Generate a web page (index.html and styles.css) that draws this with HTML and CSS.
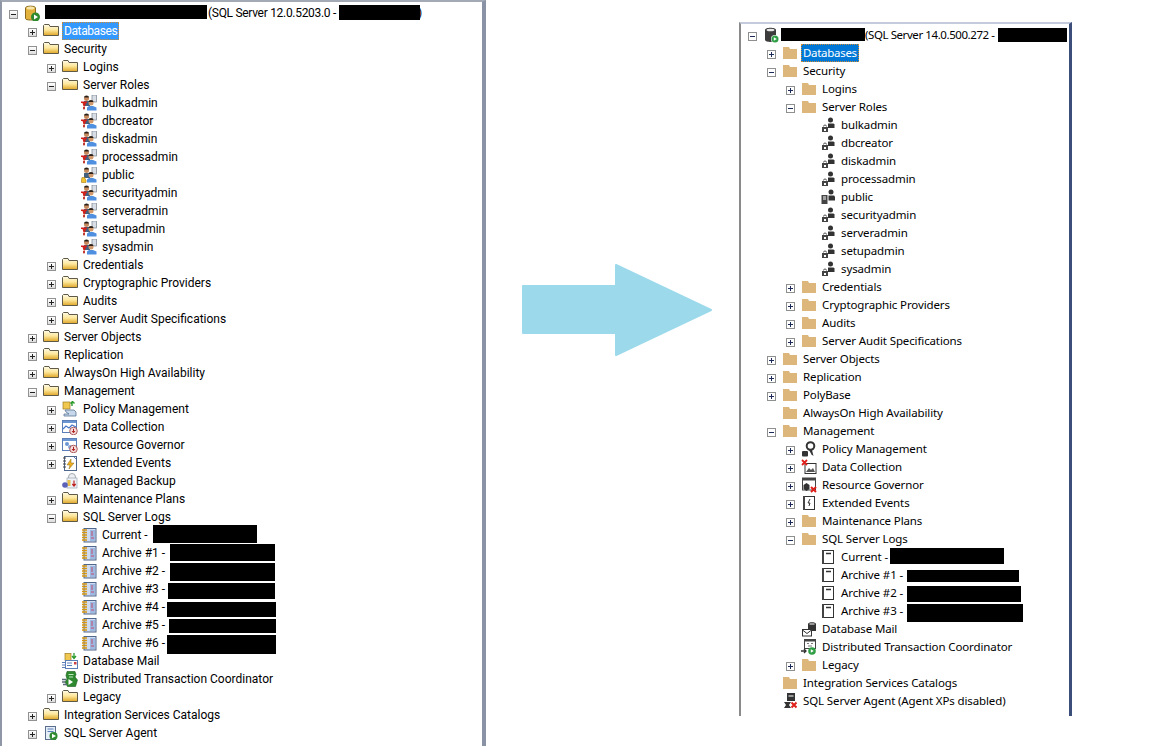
FILE: index.html
```html
<!DOCTYPE html>
<html lang="en">
<head>
  <meta charset="UTF-8">
  <title>Object Explorer - before and after</title>
  <link rel="stylesheet" href="styles.css">
</head>
<body>

  <!-- icons -->
  <svg class="defs" width="0" height="0">
    <defs>
      <linearGradient id="gold" x1="0" y1="0" x2="0" y2="1">
        <stop offset="0" stop-color="#fffbe8"/><stop offset="0.5" stop-color="#fde79a"/><stop offset="1" stop-color="#dfa526"/>
      </linearGradient>
      <symbol id="folder-old" viewBox="0 0 16 16">
        <path d="M.5 12.500V2.500l1-1h4.500l1 2h8.500v9z" fill="url(#gold)" stroke="#5f5a48"/>
      </symbol>
      <symbol id="folder-new" viewBox="0 0 16 16">
        <path d="M1 14V2h6l1 2h7v10z" fill="#dcb67a"/>
      </symbol>
      <symbol id="server-old" viewBox="0 0 16 16">
        <path d="M1.500 3C1.500 .5 11.500 .5 11.500 3V13.500c0 2-10 2-10 0z" fill="#e3b23c" stroke="#8a6a20"/>
        <ellipse cx="6.500" cy="3" rx="4" ry="1.500" fill="#f8e6a8"/>
        <circle cx="11.500" cy="12" r="4.500" fill="#2f8a2f"/><path d="M10 9.500l4 2.500-4 2.500z" fill="#fff"/>
      </symbol>
      <symbol id="server-new" viewBox="0 0 16 16">
        <path d="M2 3C2 0 13 0 13 3v10c0 2.500-11 2.500-11 0z" fill="#3c3c3c"/>
        <ellipse cx="7.500" cy="3" rx="4" ry="1.300" fill="#e8e8e8"/>
        <circle cx="12" cy="12" r="4" fill="#fff"/><circle cx="12" cy="12" r="3.500" fill="#2f9e44"/>
        <path d="M10.800 10.200l3 1.800-3 1.800z" fill="#fff"/>
      </symbol>
      <symbol id="role-red" viewBox="0 0 16 16">
        <rect x="11" y="0" width="4.500" height="7" fill="#d8dde6" stroke="#77808c" stroke-width=".7"/>
        <circle cx="5.500" cy="3.500" r="2.500" fill="#c58a5e"/><path d="M3 2.500a2.500 2 0 0 1 5 0z" fill="#2c2018"/>
        <path d="M3 6h6v5H3z" fill="#43607f"/>
        <circle cx="10" cy="8" r="2.500" fill="#d29a6c"/><path d="M7.500 7a2.500 2 0 0 1 5 0z" fill="#2c2018"/>
        <path d="M6 15.500v-3l2-1.500h4l3.500 1.500v3z" fill="#4f8fe0"/>
        <path d="M0 6.500h6v1.500H5l-1 3.500H2.500L1.500 8H0z" fill="#d2201a"/>
        <path d="M2 12h2v1.500l-1 1.500-1-1.500z" fill="#c23b32"/>
      </symbol>
      <symbol id="role-public" viewBox="0 0 16 16">
        <rect x="11" y="0" width="4.500" height="7" fill="#d8dde6" stroke="#77808c" stroke-width=".7"/>
        <circle cx="5.500" cy="3.500" r="2.500" fill="#c58a5e"/><path d="M3 2.500a2.500 2 0 0 1 5 0z" fill="#2c2018"/>
        <path d="M3 6h6v5H3z" fill="#43607f"/>
        <circle cx="10" cy="8" r="2.500" fill="#d29a6c"/><path d="M7.500 7a2.500 2 0 0 1 5 0z" fill="#2c2018"/>
        <path d="M6 15.500v-3l2-1.500h4l3.500 1.500v3z" fill="#4f8fe0"/>
        <path d="M1 10.500h3v1.500l1 1v2.500H.5V13z" fill="#f2c230" stroke="#a87c10" stroke-width=".6"/>
      </symbol>
      <symbol id="role-new" viewBox="0 0 16 16">
        <circle cx="10.500" cy="3" r="2.500" fill="#333"/>
        <path d="M8 6.500h5.500l1 1v3.500H8z" fill="#333"/>
        <path d="M3.500 9.500a1.500 1.500 0 0 1 3 0" fill="none" stroke="#555"/>
        <rect x="2" y="10" width="6" height="5" fill="#444"/><rect x="4" y="12" width="2" height="2" fill="#fff"/>
      </symbol>
      <symbol id="public-new" viewBox="0 0 16 16">
        <circle cx="11" cy="3" r="2.500" fill="#333"/>
        <path d="M8.500 6.500H14l1 1v4H8.500z" fill="#333"/>
        <rect x="1.500" y="6" width="6" height="9" fill="#444"/>
        <path d="M3 8h3M3 10h3" stroke="#fff"/>
      </symbol>
      <symbol id="log-old" viewBox="0 0 16 16">
        <rect x="3" y="1.500" width="12" height="13.500" fill="#cfdcf2" stroke="#50678c"/>
        <path d="M9 3h5v11H9z" fill="#9db9e2"/>
        <path d="M1 3h5M1 5.500h5M1 8h5M1 10.500h5M1 13h5" stroke="#d8960f" stroke-width="1.400"/>
        <path d="M11 4v5M10 11h3" stroke="#c24a6a"/>
      </symbol>
      <symbol id="log-new" viewBox="0 0 16 16">
        <rect x="2.500" y="1.500" width="11" height="13" fill="#fff" stroke="#333"/>
        <rect x="2" y="1" width="2" height="14" fill="#444"/>
        <path d="M6 4.500h5" stroke="#333" stroke-width="1.500"/>
      </symbol>
      <symbol id="policy-old" viewBox="0 0 16 16">
        <rect x="1" y="1" width="7" height="7" fill="#f0c850" stroke="#9a7a20" stroke-width=".7"/>
        <path d="M10 5V1M8.500 2.500L10.500 .5l2 2" fill="none" stroke="#2a9a2a" stroke-width="1.400"/>
        <path d="M3 9h9l2 2v4H2v-2h5l-3-2z" fill="#c6d8ea" stroke="#5c7694" stroke-width=".8"/>
      </symbol>
      <symbol id="policy-new" viewBox="0 0 16 16">
        <circle cx="9.500" cy="5" r="3.800" fill="none" stroke="#333" stroke-width="2"/>
        <path d="M11 9l1.500 6-2-1.500L8 9z" fill="#333"/>
        <rect x="1" y="10" width="6" height="5.500" rx="1" fill="#333"/>
      </symbol>
      <symbol id="chart-old" viewBox="0 0 16 16">
        <rect x=".5" y="1.500" width="14" height="12" fill="#fff" stroke="#5a7fb8"/>
        <rect x="1" y="2" width="13" height="2" fill="#6c96d2"/>
        <path d="M1 10l3-3 3 2 3-3 4 2" fill="none" stroke="#4a78c8" stroke-width="1.200"/>
        <circle cx="11.500" cy="12" r="3.800" fill="#f4dcdc" stroke="#9a3a3a" stroke-width=".8"/>
        <path d="M11.500 9.800v3.500M10 12l1.500 1.800 1.500-1.800" fill="none" stroke="#b02020"/>
      </symbol>
      <symbol id="rg-old" viewBox="0 0 16 16">
        <rect x=".5" y="1.500" width="14" height="12" fill="#fff" stroke="#5a7fb8"/>
        <rect x="1" y="2" width="13" height="2" fill="#6c96d2"/>
        <circle cx="5" cy="7" r="2" fill="#6c96d2"/><circle cx="8" cy="10" r="2" fill="#8aa8d8"/>
        <circle cx="11.500" cy="12" r="3.800" fill="#f4dcdc" stroke="#9a3a3a" stroke-width=".8"/>
        <path d="M11.500 9.800v3.500M10 12l1.500 1.800 1.500-1.800" fill="none" stroke="#b02020"/>
      </symbol>
      <symbol id="ee-old" viewBox="0 0 16 16">
        <rect x="2.500" y="1.500" width="12" height="14" fill="#fff" stroke="#50678c"/>
        <path d="M1 3h3M1 6h3M1 9h3M1 12h3" stroke="#444"/>
        <path d="M9 4L5 10h3l-1 4 5-6H9z" fill="#eeb020" stroke="#8a6a10" stroke-width=".5"/>
        <path d="M12 2l2 2" stroke="#5a7fb8"/>
      </symbol>
      <symbol id="backup-old" viewBox="0 0 16 16">
        <circle cx="10" cy="4" r="3.500" fill="#eef0f2" stroke="#a0a8b2"/>
        <rect x="5" y="5" width="10" height="10" fill="#eef2f6" stroke="#9aa6b4" stroke-width=".7"/>
        <rect x="5.500" y="7" width="3" height="6" fill="#e8c050"/>
        <circle cx="3" cy="12" r="2.800" fill="#5c62b8"/>
        <path d="M12 7.500v5M10.300 11l1.700 2 1.700-2" fill="none" stroke="#c02020" stroke-width="1.200"/>
      </symbol>
      <symbol id="mail-old" viewBox="0 0 16 16">
        <rect x="3" y="0.500" width="6" height="7" fill="#f0c850" stroke="#9a7a20" stroke-width=".7"/>
        <path d="M12 0v5M10 3l2 2.500L14 3" fill="none" stroke="#2a9a2a" stroke-width="1.300"/>
        <rect x="3.500" y="7.500" width="12" height="8" fill="#fff" stroke="#5a7fb8"/>
        <path d="M5 10h5M5 12.500h5" stroke="#5a7fb8"/><rect x="12" y="9" width="2.500" height="2.500" fill="#d04040"/>
        <path d="M0 9.500h3M0 12h3M0 14.500h3" stroke="#5a7fb8"/>
      </symbol>
      <symbol id="mail-new" viewBox="0 0 16 16">
        <path d="M7 3C7 .5 15 .5 15 3v7H7z" fill="#333"/><path d="M8.500 3h5" stroke="#fff"/>
        <rect x="1.500" y="8.500" width="9" height="6.500" fill="#fff" stroke="#333"/>
        <path d="M1.500 9l4.500 3.500L10.500 9" fill="none" stroke="#333"/>
      </symbol>
      <symbol id="dtc-old" viewBox="0 0 16 16">
        <path d="M5 .5h8l1 3-1 2.500 2.500 3-2 6.500H5.500L3 11l2-3-1-3.500z" fill="#2f8a2f" stroke="#1a5a1a" stroke-width=".6"/>
        <path d="M6.500 3.500h5M7 6h4" stroke="#bfe8bf"/>
        <path d="M0 8.500h4M0 11h3.500M1 13.500h4" stroke="#5a6a7a" stroke-width="1.300"/>
        <path d="M6.500 8l4.500 3-4.500 3z" fill="#fff"/>
      </symbol>
      <symbol id="dtc-new" viewBox="0 0 16 16">
        <rect x="3.500" y=".5" width="11" height="9" fill="#fff" stroke="#444"/><rect x="3" y="0" width="12" height="2.500" fill="#444"/>
        <path d="M6 4.500h2M10 4.500h2M7 7h4" stroke="#777"/>
        <path d="M0 12h5M3 10l2 2-2 2" fill="none" stroke="#333" stroke-width="1.300"/>
        <circle cx="11" cy="12" r="3.800" fill="#2f9e44"/><path d="M9.800 10.200l3 1.800-3 1.800z" fill="#fff"/>
      </symbol>
      <symbol id="agent-old" viewBox="0 0 16 16">
        <rect x="2.500" y="1.500" width="10" height="13" fill="#e6eef8" stroke="#5a6e8c"/>
        <path d="M4.500 4h6M4.500 6.500h6" stroke="#5a7fb8"/>
        <circle cx="10.500" cy="11" r="4" fill="#2f8a2f"/><path d="M9 8.800l4 2.200-4 2.200z" fill="#fff"/>
      </symbol>
      <symbol id="agent-new" viewBox="0 0 16 16">
        <rect x="5" y="0" width="8" height="8" fill="#333"/><path d="M6.500 3h5" stroke="#fff"/>
        <path d="M2 9h7l-2 3 2 3H2l2-3z" fill="#333"/>
        <path d="M9.500 9.500l5 5M14.500 9.500l-5 5" stroke="#e0201a" stroke-width="2"/>
      </symbol>
      <symbol id="dc-new" viewBox="0 0 16 16">
        <rect x="4" y="4.500" width="11" height="10" fill="#fff" stroke="#333"/>
        <path d="M5 13l3-4 2 2 2-2 2 4z" fill="#555"/>
        <path d="M1 1l5 5M6 1L1 6" stroke="#e0201a" stroke-width="1.800"/>
      </symbol>
      <symbol id="rg-new" viewBox="0 0 16 16">
        <rect x="1" y="0.500" width="14" height="3" fill="#444"/>
        <rect x="1.500" y="3" width="13" height="10" fill="#fff" stroke="#444"/>
        <path d="M2.500 8l3-2 3 2v4l-3 2-3-2z" fill="#333"/>
        <path d="M10 10l5 5M15 10l-5 5" stroke="#e0201a" stroke-width="2"/>
      </symbol>
      <symbol id="ee-new" viewBox="0 0 16 16">
        <rect x="2.500" y="1.500" width="11" height="13" fill="#fff" stroke="#333"/>
        <rect x="2" y="1" width="2" height="14" fill="#444"/>
        <path d="M9 4L7 8h2l-1 3" fill="none" stroke="#333"/>
      </symbol>
    </defs>
  </svg>

  <div class="tree tree-old">
    <div class="row"><span class="exp"></span><svg class="icon"><use href="#server-old"/></svg><span class="bar o-root1"></span><span class="label root-label">(SQL Server 12.0.5203.0 -</span><span class="bar o-root2"></span><span class="label root-tail">)</span></div>
    <div class="row l1"><span class="exp plus"></span><svg class="icon"><use href="#folder-old"/></svg><span class="label selected">Databases</span></div>
    <div class="row l1"><span class="exp"></span><svg class="icon"><use href="#folder-old"/></svg><span class="label">Security</span></div>
    <div class="row l2"><span class="exp plus"></span><svg class="icon"><use href="#folder-old"/></svg><span class="label">Logins</span></div>
    <div class="row l2"><span class="exp"></span><svg class="icon"><use href="#folder-old"/></svg><span class="label">Server Roles</span></div>
    <div class="row l3"><span class="none"></span><svg class="icon"><use href="#role-red"/></svg><span class="label">bulkadmin</span></div>
    <div class="row l3"><span class="none"></span><svg class="icon"><use href="#role-red"/></svg><span class="label">dbcreator</span></div>
    <div class="row l3"><span class="none"></span><svg class="icon"><use href="#role-red"/></svg><span class="label">diskadmin</span></div>
    <div class="row l3"><span class="none"></span><svg class="icon"><use href="#role-red"/></svg><span class="label">processadmin</span></div>
    <div class="row l3"><span class="none"></span><svg class="icon"><use href="#role-public"/></svg><span class="label">public</span></div>
    <div class="row l3"><span class="none"></span><svg class="icon"><use href="#role-red"/></svg><span class="label">securityadmin</span></div>
    <div class="row l3"><span class="none"></span><svg class="icon"><use href="#role-red"/></svg><span class="label">serveradmin</span></div>
    <div class="row l3"><span class="none"></span><svg class="icon"><use href="#role-red"/></svg><span class="label">setupadmin</span></div>
    <div class="row l3"><span class="none"></span><svg class="icon"><use href="#role-red"/></svg><span class="label">sysadmin</span></div>
    <div class="row l2"><span class="exp plus"></span><svg class="icon"><use href="#folder-old"/></svg><span class="label">Credentials</span></div>
    <div class="row l2"><span class="exp plus"></span><svg class="icon"><use href="#folder-old"/></svg><span class="label">Cryptographic Providers</span></div>
    <div class="row l2"><span class="exp plus"></span><svg class="icon"><use href="#folder-old"/></svg><span class="label">Audits</span></div>
    <div class="row l2"><span class="exp plus"></span><svg class="icon"><use href="#folder-old"/></svg><span class="label">Server Audit Specifications</span></div>
    <div class="row l1"><span class="exp plus"></span><svg class="icon"><use href="#folder-old"/></svg><span class="label">Server Objects</span></div>
    <div class="row l1"><span class="exp plus"></span><svg class="icon"><use href="#folder-old"/></svg><span class="label">Replication</span></div>
    <div class="row l1"><span class="exp plus"></span><svg class="icon"><use href="#folder-old"/></svg><span class="label">AlwaysOn High Availability</span></div>
    <div class="row l1"><span class="exp"></span><svg class="icon"><use href="#folder-old"/></svg><span class="label">Management</span></div>
    <div class="row l2"><span class="exp plus"></span><svg class="icon"><use href="#policy-old"/></svg><span class="label">Policy Management</span></div>
    <div class="row l2"><span class="exp plus"></span><svg class="icon"><use href="#chart-old"/></svg><span class="label">Data Collection</span></div>
    <div class="row l2"><span class="exp plus"></span><svg class="icon"><use href="#rg-old"/></svg><span class="label">Resource Governor</span></div>
    <div class="row l2"><span class="exp plus"></span><svg class="icon"><use href="#ee-old"/></svg><span class="label">Extended Events</span></div>
    <div class="row l2"><span class="none"></span><svg class="icon"><use href="#backup-old"/></svg><span class="label">Managed Backup</span></div>
    <div class="row l2"><span class="exp plus"></span><svg class="icon"><use href="#folder-old"/></svg><span class="label">Maintenance Plans</span></div>
    <div class="row l2"><span class="exp"></span><svg class="icon"><use href="#folder-old"/></svg><span class="label">SQL Server Logs</span></div>
    <div class="row l3"><span class="none"></span><svg class="icon"><use href="#log-old"/></svg><span class="label">Current -</span><span class="bar o-cur"></span></div>
    <div class="row l3"><span class="none"></span><svg class="icon"><use href="#log-old"/></svg><span class="label">Archive #1 -</span><span class="bar o-a1"></span></div>
    <div class="row l3"><span class="none"></span><svg class="icon"><use href="#log-old"/></svg><span class="label">Archive #2 -</span><span class="bar o-a2"></span></div>
    <div class="row l3"><span class="none"></span><svg class="icon"><use href="#log-old"/></svg><span class="label">Archive #3 -</span><span class="bar o-a3"></span></div>
    <div class="row l3"><span class="none"></span><svg class="icon"><use href="#log-old"/></svg><span class="label">Archive #4 -</span><span class="bar o-a4"></span></div>
    <div class="row l3"><span class="none"></span><svg class="icon"><use href="#log-old"/></svg><span class="label">Archive #5 -</span><span class="bar o-a5"></span></div>
    <div class="row l3"><span class="none"></span><svg class="icon"><use href="#log-old"/></svg><span class="label">Archive #6 -</span><span class="bar o-a6"></span></div>
    <div class="row l2"><span class="none"></span><svg class="icon"><use href="#mail-old"/></svg><span class="label">Database Mail</span></div>
    <div class="row l2"><span class="none"></span><svg class="icon"><use href="#dtc-old"/></svg><span class="label">Distributed Transaction Coordinator</span></div>
    <div class="row l2"><span class="exp plus"></span><svg class="icon"><use href="#folder-old"/></svg><span class="label">Legacy</span></div>
    <div class="row l1"><span class="exp plus"></span><svg class="icon"><use href="#folder-old"/></svg><span class="label">Integration Services Catalogs</span></div>
    <div class="row l1"><span class="exp plus"></span><svg class="icon"><use href="#agent-old"/></svg><span class="label">SQL Server Agent</span></div>
  </div>

  <svg class="arrow" width="190" height="92" viewBox="0 0 190 92">
    <path d="M1 22H94V1L189 46 94 91V69H1z" fill="#9bd9eb" stroke="#9bd9eb" stroke-width="2" stroke-linejoin="round"/>
  </svg>

  <div class="tree tree-new">
    <div class="row"><span class="exp"></span><svg class="icon"><use href="#server-new"/></svg><span class="bar n-root1"></span><span class="label root-label">(SQL Server 14.0.500.272 -</span><span class="bar n-root2"></span></div>
    <div class="row l1"><span class="exp plus"></span><svg class="icon"><use href="#folder-new"/></svg><span class="label selected">Databases</span></div>
    <div class="row l1"><span class="exp"></span><svg class="icon"><use href="#folder-new"/></svg><span class="label">Security</span></div>
    <div class="row l2"><span class="exp plus"></span><svg class="icon"><use href="#folder-new"/></svg><span class="label">Logins</span></div>
    <div class="row l2"><span class="exp"></span><svg class="icon"><use href="#folder-new"/></svg><span class="label">Server Roles</span></div>
    <div class="row l3"><span class="none"></span><svg class="icon"><use href="#role-new"/></svg><span class="label">bulkadmin</span></div>
    <div class="row l3"><span class="none"></span><svg class="icon"><use href="#role-new"/></svg><span class="label">dbcreator</span></div>
    <div class="row l3"><span class="none"></span><svg class="icon"><use href="#role-new"/></svg><span class="label">diskadmin</span></div>
    <div class="row l3"><span class="none"></span><svg class="icon"><use href="#role-new"/></svg><span class="label">processadmin</span></div>
    <div class="row l3"><span class="none"></span><svg class="icon"><use href="#public-new"/></svg><span class="label">public</span></div>
    <div class="row l3"><span class="none"></span><svg class="icon"><use href="#role-new"/></svg><span class="label">securityadmin</span></div>
    <div class="row l3"><span class="none"></span><svg class="icon"><use href="#role-new"/></svg><span class="label">serveradmin</span></div>
    <div class="row l3"><span class="none"></span><svg class="icon"><use href="#role-new"/></svg><span class="label">setupadmin</span></div>
    <div class="row l3"><span class="none"></span><svg class="icon"><use href="#role-new"/></svg><span class="label">sysadmin</span></div>
    <div class="row l2"><span class="exp plus"></span><svg class="icon"><use href="#folder-new"/></svg><span class="label">Credentials</span></div>
    <div class="row l2"><span class="exp plus"></span><svg class="icon"><use href="#folder-new"/></svg><span class="label">Cryptographic Providers</span></div>
    <div class="row l2"><span class="exp plus"></span><svg class="icon"><use href="#folder-new"/></svg><span class="label">Audits</span></div>
    <div class="row l2"><span class="exp plus"></span><svg class="icon"><use href="#folder-new"/></svg><span class="label">Server Audit Specifications</span></div>
    <div class="row l1"><span class="exp plus"></span><svg class="icon"><use href="#folder-new"/></svg><span class="label">Server Objects</span></div>
    <div class="row l1"><span class="exp plus"></span><svg class="icon"><use href="#folder-new"/></svg><span class="label">Replication</span></div>
    <div class="row l1"><span class="exp plus"></span><svg class="icon"><use href="#folder-new"/></svg><span class="label">PolyBase</span></div>
    <div class="row l1"><span class="none"></span><svg class="icon"><use href="#folder-new"/></svg><span class="label">AlwaysOn High Availability</span></div>
    <div class="row l1"><span class="exp"></span><svg class="icon"><use href="#folder-new"/></svg><span class="label">Management</span></div>
    <div class="row l2"><span class="exp plus"></span><svg class="icon"><use href="#policy-new"/></svg><span class="label">Policy Management</span></div>
    <div class="row l2"><span class="exp plus"></span><svg class="icon"><use href="#dc-new"/></svg><span class="label">Data Collection</span></div>
    <div class="row l2"><span class="exp plus"></span><svg class="icon"><use href="#rg-new"/></svg><span class="label">Resource Governor</span></div>
    <div class="row l2"><span class="exp plus"></span><svg class="icon"><use href="#ee-new"/></svg><span class="label">Extended Events</span></div>
    <div class="row l2"><span class="exp plus"></span><svg class="icon"><use href="#folder-new"/></svg><span class="label">Maintenance Plans</span></div>
    <div class="row l2"><span class="exp"></span><svg class="icon"><use href="#folder-new"/></svg><span class="label">SQL Server Logs</span></div>
    <div class="row l3"><span class="none"></span><svg class="icon"><use href="#log-new"/></svg><span class="label">Current -</span><span class="bar n-cur"></span></div>
    <div class="row l3"><span class="none"></span><svg class="icon"><use href="#log-new"/></svg><span class="label">Archive #1 -</span><span class="bar n-a1"></span></div>
    <div class="row l3"><span class="none"></span><svg class="icon"><use href="#log-new"/></svg><span class="label">Archive #2 -</span><span class="bar n-a2"></span></div>
    <div class="row l3"><span class="none"></span><svg class="icon"><use href="#log-new"/></svg><span class="label">Archive #3 -</span><span class="bar n-a3"></span></div>
    <div class="row l2"><span class="none"></span><svg class="icon"><use href="#mail-new"/></svg><span class="label">Database Mail</span></div>
    <div class="row l2"><span class="none"></span><svg class="icon"><use href="#dtc-new"/></svg><span class="label">Distributed Transaction Coordinator</span></div>
    <div class="row l2"><span class="exp plus"></span><svg class="icon"><use href="#folder-new"/></svg><span class="label">Legacy</span></div>
    <div class="row l1"><span class="none"></span><svg class="icon"><use href="#folder-new"/></svg><span class="label">Integration Services Catalogs</span></div>
    <div class="row l1"><span class="none"></span><svg class="icon"><use href="#agent-new"/></svg><span class="label">SQL Server Agent (Agent XPs disabled)</span></div>
  </div>

</body>
</html>
```

FILE: styles.css
```css
body {
  margin: 0;
  height: 746px;
  overflow: hidden;
  display: flex;
  align-items: flex-start;
  background-color: #ffffff;
  color: #000000;
  font-size: 12px;
}
.defs { position: absolute; }

/* tree panels */
.tree { box-sizing: border-box; flex: none; }
.tree-old {
  width: 486px; height: 746px;
  padding-top: 2px;
  border-top: 2px solid #a3a9b5;
  border-left: 2px solid #8f97a6;
  border-right: 4px solid #8a93a5;
  font-family: Roboto, sans-serif;
}
.tree-new {
  width: 333px; height: 694px;
  margin: 22px 0 0 27px;
  padding-top: 2px;
  border-top: 2px solid #c3cbdc;
  border-left: 2px solid #8a8a8a;
  border-right: 3px solid #3b4f7a;
  font-family: "Noto Sans", sans-serif;
  font-size: 11.5px;
  letter-spacing: -0.12px;
}

/* a row: 9px box, 6px gap, 16px icon, 5px gap, label */
.row { display: flex; align-items: center; height: 18px; padding-left: 7px; white-space: nowrap; }
.row.l1 { padding-left: 26px; }
.row.l2 { padding-left: 45px; }
.row.l3 { padding-left: 64px; }

.exp, .none { flex: none; width: 9px; height: 9px; margin: 3px 6px 0 0; box-sizing: border-box; }
.exp { position: relative; border: 1px solid #919191; background: linear-gradient(#ffffff, #dcdcdc); }
.tree-new .exp { border-color: #8e8f8f; background: #ffffff; }
.exp::before { content: ""; position: absolute; left: 1px; top: 3px; width: 5px; height: 1px; background-color: #222222; }
.exp.plus::after { content: ""; position: absolute; left: 3px; top: 1px; width: 1px; height: 5px; background-color: #222222; }
.tree-new .exp::before, .tree-new .exp.plus::after { background-color: #1c2a5a; }

.icon { flex: none; width: 16px; height: 16px; margin-right: 5px; }
.label { line-height: 18px; }
.root-label { letter-spacing: -0.3px; }
.tree-new .root-label { letter-spacing: -0.42px; }
.root-tail { margin-left: -2px; }
.selected { margin-left: -2px; padding: 0 1px; border: 1px dotted #d08a30; background-color: #3399ff; color: #ffffff; line-height: 16px; letter-spacing: -0.4px; }
.tree-new .selected { background-color: #0078d7; letter-spacing: -0.3px; }

/* blacked out names */
.bar { flex: none; align-self: flex-start; background-color: #000000; position: relative; }
.o-root1 { width: 162px; height: 14px; margin: 1px 1px 0 0; }
.o-root2 { width: 81px; height: 15px; margin: 1px 0 0 3px; }
.o-cur { width: 104px; height: 18px; margin: -1px 0 0 5px; }
.o-a1 { width: 105px; height: 17px; margin: 0 0 0 5px; }
.o-a2 { width: 105px; height: 18px; margin: 1px 0 0 5px; }
.o-a3 { width: 107px; height: 16px; margin: 3px 0 0 3px; }
.o-a4 { width: 109px; height: 15px; margin: 4px 0 0 2px; }
.o-a5 { width: 107px; height: 14px; margin: 3px 0 0 4px; }
.o-a6 { width: 109px; height: 19px; margin: 1px 0 0 2px; }
.n-root1 { width: 84px; height: 13px; margin: 2px 0 0 -3px; }
.n-root2 { width: 69px; height: 14px; margin: 2px 0 0 3px; }
.n-cur { width: 114px; height: 16px; margin: 0 0 0 2px; }
.n-a1 { width: 112px; height: 12px; margin: 4px 0 0 4px; }
.n-a2 { width: 114px; height: 16px; margin: 2px 0 0 4px; }
.n-a3 { width: 116px; height: 18px; margin: 2px 0 0 4px; }

.arrow { flex: none; margin: 264px 0 0 36px; }
```
